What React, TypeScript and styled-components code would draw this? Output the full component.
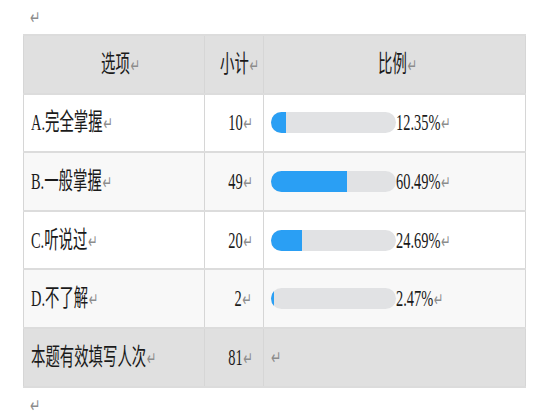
import React from "react";
import styled, { createGlobalStyle } from "styled-components";

const Global = createGlobalStyle`
  html, body { margin: 0; padding: 0; background: #ffffff; }
  body { font-family: "Liberation Serif", "Noto Sans CJK SC", serif; color: #1a1a1a; }
`;

const Page = styled.div`
  width: 560px;
  height: 420px;
  padding: 0 0 0 23px;
  box-sizing: border-box;
`;

const Para = styled.div<{ $h: number }>`
  height: ${(p) => p.$h}px;
  display: flex;
  align-items: center;
  padding-left: 7px;
`;

const Mark = styled.span`
  font-family: "DejaVu Sans", sans-serif;
  font-size: 19px;
  color: #8c8c8c;
  margin-left: 1px;
`;

const LoneMark = styled.span`
  display: inline-block;
  font-family: "DejaVu Sans", sans-serif;
  font-size: 19px;
  line-height: 20px;
  color: #8c8c8c;
  transform: scaleX(0.65);
  transform-origin: left center;
`;

const Table = styled.table`
  border-collapse: collapse;
  width: 503px;
  table-layout: fixed;
  border: 1px solid #d6d6d6;
`;

const Row = styled.tr<{ $bg: string }>`
  background: ${(p) => p.$bg};
  height: 58.6px;
`;

const Cell = styled.td<{ $align: "left" | "right" | "center" }>`
  box-sizing: border-box;
  border-top: 2px solid #dcdcdc;
  border-bottom: 2px solid #dcdcdc;
  border-left: 1px solid #d6d6d6;
  border-right: 1px solid #d6d6d6;
  padding: 0 ${(p) => (p.$align === "right" ? "11px" : "0")} 0 7px;
  text-align: ${(p) => p.$align};
  vertical-align: middle;
  white-space: nowrap;
  overflow: hidden;
`;

const HeadCell = styled.th<{ $w: number }>`
  box-sizing: border-box;
  width: ${(p) => p.$w}px;
  border-top: 2px solid #dcdcdc;
  border-bottom: 2px solid #dcdcdc;
  border-left: 1px solid #d6d6d6;
  border-right: 1px solid #d6d6d6;
  padding: 0;
  font-weight: normal;
  vertical-align: middle;
  white-space: nowrap;
`;

const HeadInner = styled.div<{ $shift: number }>`
  display: flex;
  justify-content: center;
  padding-left: ${(p) => p.$shift}px;
`;

const Txt = styled.span<{ $origin: string }>`
  flex: none;
  display: inline-block;
  font-size: 24px;
  line-height: 28px;
  transform: scaleX(0.6);
  transform-origin: ${(p) => p.$origin};
  white-space: nowrap;
`;

const BarLine = styled.div`
  display: flex;
  align-items: center;
`;

const Track = styled.div`
  flex: none;
  width: 125px;
  height: 21px;
  border-radius: 11px;
  background: #e1e2e4;
  overflow: hidden;
  display: flex;
`;

const Fill = styled.div`
  height: 100%;
  background: #2a9ff4;
`;

const rows = [
  { label: "A.完全掌握", n: 10, pct: 12.35, bg: "#ffffff" },
  { label: "B.一般掌握", n: 49, pct: 60.49, bg: "#f8f8f8" },
  { label: "C.听说过", n: 20, pct: 24.69, bg: "#ffffff" },
  { label: "D.不了解", n: 2, pct: 2.47, bg: "#f8f8f8" },
];

export default function App() {
  return (
    <Page>
      <Global />
      <Para $h={34}>
        <LoneMark>↵</LoneMark>
      </Para>
      <Table>
        <thead>
          <Row $bg="#e0e0e0">
            <HeadCell $w={181}>
              <HeadInner $shift={12}>
                <Txt $origin="center">选项<Mark>↵</Mark></Txt>
              </HeadInner>
            </HeadCell>
            <HeadCell $w={59}>
              <HeadInner $shift={10}>
                <Txt $origin="center">小计<Mark>↵</Mark></Txt>
              </HeadInner>
            </HeadCell>
            <HeadCell $w={262}>
              <HeadInner $shift={6}>
                <Txt $origin="center">比例<Mark>↵</Mark></Txt>
              </HeadInner>
            </HeadCell>
          </Row>
        </thead>
        <tbody>
          {rows.map((r) => (
            <Row key={r.label} $bg={r.bg}>
              <Cell $align="left">
                <Txt $origin="left center">{r.label}<Mark>↵</Mark></Txt>
              </Cell>
              <Cell $align="right">
                <Txt $origin="right center">{r.n}<Mark>↵</Mark></Txt>
              </Cell>
              <Cell $align="left">
                <BarLine>
                  <Track>
                    <Fill style={{ width: `${r.pct}%` }} />
                  </Track>
                  <Txt $origin="left center">{r.pct.toFixed(2)}%<Mark>↵</Mark></Txt>
                </BarLine>
              </Cell>
            </Row>
          ))}
          <Row $bg="#e0e0e0">
            <Cell $align="left">
              <Txt $origin="left center">本题有效填写人次<Mark>↵</Mark></Txt>
            </Cell>
            <Cell $align="right">
              <Txt $origin="right center">81<Mark>↵</Mark></Txt>
            </Cell>
            <Cell $align="left">
              <LoneMark>↵</LoneMark>
            </Cell>
          </Row>
        </tbody>
      </Table>
      <Para $h={34}>
        <LoneMark>↵</LoneMark>
      </Para>
    </Page>
  );
}
